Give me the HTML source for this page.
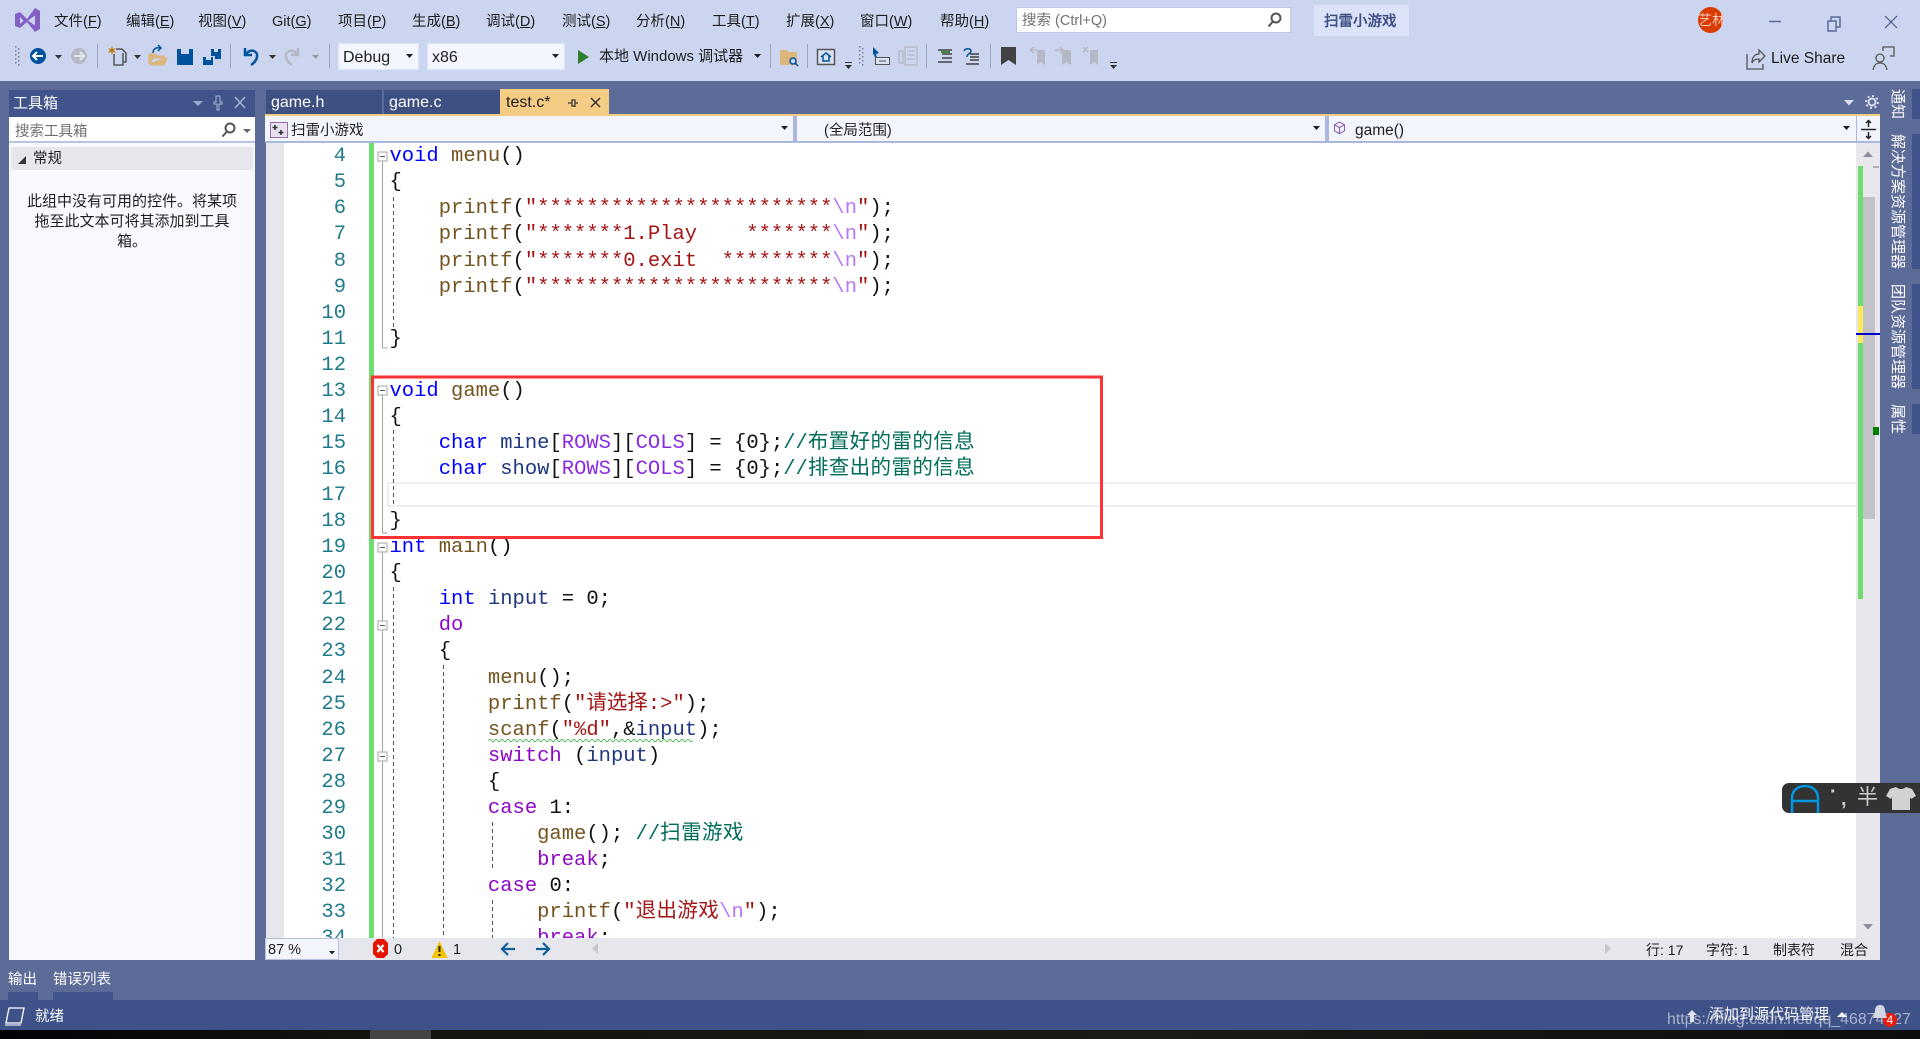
<!DOCTYPE html>
<html lang="zh"><head><meta charset="utf-8"><title>扫雷小游戏 - Visual Studio</title>
<style>
html,body{margin:0;padding:0;background:#5d6b99}
body{width:1920px;height:1039px;position:relative;overflow:hidden;font-family:"Liberation Sans","Noto Sans CJK SC",sans-serif;font-size:15px;color:#1e1e1e}
.a{position:absolute}
.t{position:absolute;white-space:nowrap;line-height:20px}
.m{font-size:14.5px}
.w{color:#fff}
#ed{position:absolute;left:266px;top:143px;width:1590px;height:795px;overflow:hidden;background:#fff}
#nums{position:absolute;left:0;top:1.3px;width:80px;font:20.5px/26.07px "Liberation Mono",monospace;color:#1f7a8c;text-align:right}
#nums div,#code div{height:26.07px}
#code{position:absolute;left:123.5px;top:1.3px;font:20.5px/26.07px "Liberation Mono","Noto Sans CJK SC",monospace;white-space:pre;color:#111}
.k{color:#0000ff}.c{color:#8f08c4}.f{color:#74531f}.s{color:#a31515}.e{color:#b776fb}.r{color:#8a2be2}.v{color:#1f377f}.g{color:#006d5b}
.z{letter-spacing:.4px}
.vt{position:absolute;writing-mode:vertical-rl;text-orientation:sideways;color:#fff;font-size:15px;line-height:18px;white-space:nowrap}
</style></head><body>
<!-- chrome backgrounds -->
<div class="a" style="left:0;top:0;width:1920px;height:81px;background:#ccd5f0"></div>
<div class="a" style="left:1016px;top:7px;width:275px;height:26px;background:#fff;box-sizing:border-box;border:1px solid #bcc7e6"></div>
<div class="a" style="left:1314px;top:5px;width:95px;height:31px;background:#dce2f7"></div>
<div class="a" style="left:338px;top:43px;width:81px;height:27px;background:#f3f6fe;box-sizing:border-box;border:1px solid #dfe6f8"></div>
<div class="a" style="left:427px;top:43px;width:138px;height:27px;background:#f3f6fe;box-sizing:border-box;border:1px solid #dfe6f8"></div>

<!-- menu -->
<span class="t m" style="left:54px;top:11.500px">文件(<u>F</u>)</span>
<span class="t m" style="left:126px;top:11.500px">编辑(<u>E</u>)</span>
<span class="t m" style="left:198px;top:11.500px">视图(<u>V</u>)</span>
<span class="t m" style="left:272px;top:11.500px">Git(<u>G</u>)</span>
<span class="t m" style="left:338px;top:11.500px">项目(<u>P</u>)</span>
<span class="t m" style="left:412px;top:11.500px">生成(<u>B</u>)</span>
<span class="t m" style="left:486px;top:11.500px">调试(<u>D</u>)</span>
<span class="t m" style="left:562px;top:11.500px">测试(<u>S</u>)</span>
<span class="t m" style="left:636px;top:11.500px">分析(<u>N</u>)</span>
<span class="t m" style="left:712px;top:11.500px">工具(<u>T</u>)</span>
<span class="t m" style="left:786px;top:11.500px">扩展(<u>X</u>)</span>
<span class="t m" style="left:860px;top:11.500px">窗口(<u>W</u>)</span>
<span class="t m" style="left:940px;top:11.500px">帮助(<u>H</u>)</span>
<span class="t m" style="left:1022px;top:11px;color:#717171">搜索 (Ctrl+Q)</span>
<span class="t" style="left:1324px;top:12px;color:#3f5185;font-size:14.5px;font-weight:500;-webkit-text-stroke:.3px #3f5185">扫雷小游戏</span>
<div class="a" style="left:1698px;top:7px;width:25px;height:26px;border-radius:50%;background:#dc3b00"></div>
<span class="t" style="left:1698px;top:10px;color:#f6cdbc;font-size:14px;width:25px;overflow:hidden">艺林</span>

<!-- toolbar text -->
<span class="t" style="left:343px;top:48px;font-size:16px">Debug</span>
<span class="t" style="left:432px;top:48px;font-size:16px">x86</span>
<span class="t" style="left:599px;top:47px;font-size:15px">本地 Windows 调试器</span>
<span class="t" style="left:1771px;top:49px;font-size:15.500px">Live Share</span>

<!-- toolbox -->
<div class="a" style="left:9px;top:90px;width:246px;height:870px;background:#f8f9fe"></div>
<div class="a" style="left:9px;top:90px;width:246px;height:27px;background:#40538a"></div>
<span class="t w" style="left:13px;top:94px">工具箱</span>
<div class="a" style="left:9px;top:117px;width:246px;height:26px;background:#fff;box-sizing:border-box;border-bottom:2px solid #b9c4e2"></div>
<span class="t" style="left:15px;top:121.500px;color:#717171;font-size:14.5px">搜索工具箱</span>
<div class="a" style="left:11px;top:147px;width:242px;height:23px;background:#e6e7ed"></div>
<span class="t" style="left:33px;top:149px;font-size:14.5px">常规</span>
<div class="a" style="left:25px;top:191.500px;width:214px;text-align:center;font-size:15px;line-height:20.3px">此组中没有可用的控件。将某项拖至此文本可将其添加到工具箱。</div>

<!-- tabs -->
<div class="a" style="left:266px;top:90px;width:116px;height:24px;background:#3e5082"></div>
<div class="a" style="left:384px;top:90px;width:116px;height:24px;background:#3e5082"></div>
<div class="a" style="left:500px;top:89px;width:109px;height:25px;background:#f5cc84"></div>
<span class="t w" style="left:271px;top:93px;font-size:16px">game.h</span>
<span class="t w" style="left:389px;top:93px;font-size:16px">game.c</span>
<span class="t" style="left:506px;top:93px;font-size:16px">test.c*</span>
<div class="a" style="left:265px;top:114px;width:1615px;height:2px;background:#f5cc84"></div>

<!-- nav bar -->
<div class="a" style="left:265px;top:116px;width:1615px;height:27px;background:#f2f5fe;box-sizing:border-box;border-bottom:2px solid #a9b8dc"></div>
<div class="a" style="left:793px;top:116px;width:4px;height:27px;background:#a9b8dc"></div>
<div class="a" style="left:1325px;top:116px;width:4px;height:27px;background:#a9b8dc"></div>
<div class="a" style="left:1856px;top:116px;width:1px;height:27px;background:#a9b8dc"></div>
<span class="t" style="left:291px;top:120.500px;font-size:14.5px">扫雷小游戏</span>
<span class="t" style="left:824px;top:120.500px;font-size:14.5px">(全局范围)</span>
<span class="t" style="left:1355px;top:120.500px;font-size:15.5px">game()</span>

<!-- editor -->
<div id="ed">
<div class="a" style="left:0;top:0;width:18px;height:795px;background:#e6e7ed"></div>
<div class="a" style="left:121px;top:338.9px;width:1469px;height:25px;box-sizing:border-box;border:2px solid #eeeef3;border-right:0"></div>
<div id="nums"><div>4</div><div>5</div><div>6</div><div>7</div><div>8</div><div>9</div><div>10</div><div>11</div><div>12</div><div>13</div><div>14</div><div>15</div><div>16</div><div>17</div><div>18</div><div>19</div><div>20</div><div>21</div><div>22</div><div>23</div><div>24</div><div>25</div><div>26</div><div>27</div><div>28</div><div>29</div><div>30</div><div>31</div><div>32</div><div>33</div><div>34</div></div>
<div id="code"><div><span class="k">void</span> <span class="f">menu</span>()</div><div>{</div><div>    <span class="f">printf</span>(<span class="s">"************************</span><span class="e">\n</span><span class="s">"</span>);</div><div>    <span class="f">printf</span>(<span class="s">"*******1.Play    *******</span><span class="e">\n</span><span class="s">"</span>);</div><div>    <span class="f">printf</span>(<span class="s">"*******0.exit  *********</span><span class="e">\n</span><span class="s">"</span>);</div><div>    <span class="f">printf</span>(<span class="s">"************************</span><span class="e">\n</span><span class="s">"</span>);</div><div> </div><div>}</div><div> </div><div><span class="k">void</span> <span class="f">game</span>()</div><div>{</div><div>    <span class="k">char</span> <span class="v">mine</span>[<span class="r">ROWS</span>][<span class="r">COLS</span>] = {0};<span class="g">//<span class="z">布置好的雷的信息</span></span></div><div>    <span class="k">char</span> <span class="v">show</span>[<span class="r">ROWS</span>][<span class="r">COLS</span>] = {0};<span class="g">//<span class="z">排查出的雷的信息</span></span></div><div> </div><div>}</div><div><span class="k">int</span> <span class="f">main</span>()</div><div>{</div><div>    <span class="k">int</span> <span class="v">input</span> = 0;</div><div>    <span class="c">do</span></div><div>    {</div><div>        <span class="f">menu</span>();</div><div>        <span class="f">printf</span>(<span class="s">"请选择:&gt;"</span>);</div><div>        <span class="f">scanf</span>(<span class="s">"%d"</span>,&amp;<span class="v">input</span>);</div><div>        <span class="c">switch</span> (<span class="v">input</span>)</div><div>        {</div><div>        <span class="c">case</span> 1:</div><div>            <span class="f">game</span>(); <span class="g">//<span class="z">扫雷游戏</span></span></div><div>            <span class="c">break</span>;</div><div>        <span class="c">case</span> 0:</div><div>            <span class="f">printf</span>(<span class="s">"<span class="z">退出游戏</span></span><span class="e">\n</span><span class="s">"</span>);</div><div>            <span class="c">break</span>;</div></div>
</div>

<!-- scrollbar -->
<div class="a" style="left:1856px;top:143px;width:24px;height:795px;background:#e8e8ec"></div>
<div class="a" style="left:1863px;top:197px;width:12px;height:322px;background:#c2c3c9"></div>
<div class="a" style="left:1858px;top:166px;width:5px;height:433px;background:#6fdd6f"></div>
<div class="a" style="left:1858px;top:306px;width:5px;height:37px;background:#fcea5e"></div>
<div class="a" style="left:1856px;top:333px;width:24px;height:2px;background:#0000cc"></div>
<div class="a" style="left:1873px;top:427px;width:6px;height:8px;background:#008000"></div>
<div class="a" style="left:1873px;top:166px;width:6px;height:2px;background:#b0b0b4"></div>

<!-- right dock -->
<div class="a" style="left:1912px;top:89px;width:8px;height:30px;background:#40538a"></div>
<div class="a" style="left:1912px;top:134px;width:8px;height:135px;background:#40538a"></div>
<div class="a" style="left:1912px;top:284px;width:8px;height:105px;background:#40538a"></div>
<div class="a" style="left:1912px;top:404px;width:8px;height:30px;background:#40538a"></div>
<span class="vt" style="left:1888px;top:89px">通知</span>
<span class="vt" style="left:1888px;top:134px">解决方案资源管理器</span>
<span class="vt" style="left:1888px;top:284px">团队资源管理器</span>
<span class="vt" style="left:1888px;top:404px">属性</span>

<!-- editor status -->
<div class="a" style="left:265px;top:938px;width:1615px;height:22px;background:#e6e7ed"></div>
<div class="a" style="left:265px;top:938px;width:74px;height:22px;background:#f3f5fd;box-sizing:border-box;border:1px solid #b5c0de"></div>
<span class="t" style="left:268px;top:940px;font-size:14.5px">87 %</span>
<span class="t" style="left:394px;top:940px;font-size:14.5px">0</span>
<span class="t" style="left:453px;top:940px;font-size:14.5px">1</span>
<span class="t" style="left:1646px;top:940px;font-size:14px">行: 17</span>
<span class="t" style="left:1706px;top:940px;font-size:14px">字符: 1</span>
<span class="t" style="left:1773px;top:940px;font-size:14px">制表符</span>
<span class="t" style="left:1840px;top:940px;font-size:14px">混合</span>

<!-- bottom -->
<span class="t w" style="left:8px;top:970px;font-size:14.5px">输出</span>
<span class="t w" style="left:53px;top:970px;font-size:14.5px">错误列表</span>
<div class="a" style="left:8px;top:992px;width:30px;height:8px;background:#40538a"></div>
<div class="a" style="left:53px;top:992px;width:60px;height:8px;background:#40538a"></div>
<div class="a" style="left:0;top:1000px;width:1920px;height:30px;background:#3f5189"></div>
<span class="t w" style="left:35px;top:1007px;font-size:14.5px">就绪</span>
<div class="a" style="left:0;top:1030px;width:1920px;height:9px;background:linear-gradient(90deg,#020208,#14140f 20%,#1a1a16 60%,#0d0d0d)"></div>
<div class="a" style="left:370px;top:1030px;width:61px;height:9px;background:#444"></div>
<span class="t w" style="left:1709px;top:1005px;font-size:15px">添加到源代码管理</span>
<span class="t" style="left:1667px;top:1010px;font-size:15.900px;color:rgba(255,255,255,.55)">https://blog.csdn.net/qq_46874327</span>
<div class="a" style="left:1883px;top:1013px;width:14px;height:14px;border-radius:50%;background:#e81b0c;color:#fff;font-size:12px;line-height:14px;text-align:center">4</div>

<!-- IME -->
<div class="a" style="left:1782px;top:783px;width:138px;height:30px;background:#333;border-radius:7px 0 0 7px"></div>
<span class="t" style="left:1830px;top:782px;font-size:20px;font-weight:bold;color:#ccc">·</span>
<span class="t" style="left:1841px;top:789px;font-size:20px;font-weight:bold;color:#ccc">,</span>
<span class="t" style="left:1857px;top:788px;font-size:21px;color:#ccc">半</span>

<!-- icons -->
<svg class="a" style="left:0;top:0" width="1920" height="1039" viewBox="0 0 1920 1039" fill="none">
<!-- VS logo -->
<path d="M15 14l5-2 7 7 8-11 5 3v18l-5 3-8-10-7 6-5-2zM20 17v7l3.500-3.500zM28 20.500l7 5v-10z" fill="#865fc5" fill-rule="evenodd"/>
<!-- search mag -->
<g stroke="#555" stroke-width="2"><circle cx="1276" cy="18" r="4.500"/><path d="M1272.500 22l-4 4.500"/></g>
<g stroke="#555" stroke-width="2"><circle cx="230" cy="128" r="4.500"/><path d="M226.500 132l-4 4.500"/></g>
<path d="M243 129h8l-4 4z" fill="#666"/>
<!-- window ctrls -->
<path d="M1769 21.500h12" stroke="#5a6a9a" stroke-width="1.500"/>
<path d="M1828 21h8v10h-8zM1831 21v-4h9v10h-4" stroke="#5a6a9a" stroke-width="1.500"/>
<path d="M1885 16l12 12M1897 16l-12 12" stroke="#4a5a88" stroke-width="1.200"/>
<!-- gripper -->
<g fill="#7a7f90"><path d="M15 46h1.500v1.500H15zM18 48h1.500v1.500H18zM15 50h1.500v1.500H15zM18 52h1.500v1.500H18zM15 54h1.500v1.500H15zM18 56h1.500v1.500H18zM15 58h1.500v1.500H15zM18 60h1.500v1.500H18zM15 62h1.500v1.500H15zM18 64h1.500v1.500H18z"/>
<path d="M859 46h1.500v1.500H859zM862 48h1.500v1.500H862zM859 50h1.500v1.500H859zM862 52h1.500v1.500H862zM859 54h1.500v1.500H859zM862 56h1.500v1.500H862zM859 58h1.500v1.500H859zM862 60h1.500v1.500H862zM859 62h1.500v1.500H859zM862 64h1.500v1.500H862z"/></g>
<!-- back / forward -->
<circle cx="38" cy="56" r="8" fill="#00539c"/><path d="M43 56h-9M37 52l-4 4 4 4" stroke="#fff" stroke-width="2"/>
<circle cx="79" cy="56" r="8" fill="#b5b8c4"/><path d="M74 56h9M80 52l4 4-4 4" stroke="#e6e8f0" stroke-width="2"/>
<g fill="#333"><path d="M55 55h7l-3.500 4zM134 55h7l-3.500 4zM269 55h7l-3.500 4z"/></g><path d="M312 55h7l-3.500 4z" fill="#999"/>
<!-- separators -->
<g stroke="#9ba6c4"><path d="M97.500 44v24M230.500 44v24M329.500 44v24M770.500 44v24M807.500 44v24M926.500 44v24M990.500 44v24"/></g>
<!-- new project -->
<path d="M112 46l1 3 3-1-2 2 2 3-3-1-1 3-1-3-3 1 2-3-2-2 3 1z" fill="#c27d1a"/>
<path d="M114 54v11h9V53M116 49h6l4 4v9h-3" stroke="#424242" stroke-width="1.300"/>
<!-- open folder -->
<path d="M149 64V54h6l2 2h7v2h-11l-3 7h14l3-7h-3" fill="#dcb67a" stroke="#dcb67a"/>
<path d="M153 53c0-4 3-6 7-5M158 45l3 3-3 3" stroke="#00539c" stroke-width="1.500"/>
<!-- save -->
<path d="M177 49h4v5h8v-5h4v16h-16z" fill="#00539c"/>
<path d="M203 57h3v3h5v-3h2v8h-10zM211 49h3v3h4v-3h3v10h-6v-3h-4z" fill="#00539c"/>
<!-- undo/redo -->
<path d="M245 48v7h7M246 54c5-6 12-3 11 3-.5 3-3 6-6 8" stroke="#00539c" stroke-width="2.500"/>
<path d="M298 48v7h-7M297 54c-5-6-12-3-11 3 .5 3 3 6 6 8" stroke="#b5b8c4" stroke-width="2.500"/>
<!-- arrows combo -->
<g fill="#1e1e1e"><path d="M406 54h7l-3.500 4zM552 54h7l-3.500 4zM754 54h7l-3.500 4zM781 126h7l-3.500 4zM1313 126h7l-3.500 4zM1843 126h7l-3.500 4zM329 951h6l-3 3.500z"/></g>
<path d="M578 50l11 7-11 7z" fill="#2f7d2f"/>
<!-- folder search -->
<path d="M780 50h7l2 2h8v13h-17z" fill="#dcb67a"/><circle cx="793" cy="61" r="3" fill="#ccd5f0" stroke="#00539c" stroke-width="1.500"/><path d="M795 63l3 3" stroke="#00539c" stroke-width="1.500"/>
<!-- home -->
<rect x="817.500" y="49.500" width="17" height="15" fill="#dbe1f3" stroke="#555" stroke-width="1.500"/><path d="M821 57l5-4 5 4M823 56v5h6v-5" stroke="#00539c" stroke-width="1.500"/>
<g fill="#333"><path d="M845 65h7l-3.500 4zM1110 65h7l-3.500 4z"/></g><path d="M845 62.500h7M1110 62.500h7" stroke="#333"/>
<!-- cursor & grey -->
<path d="M873 47l6 6-3 1 1 4-2 0-1-4-1 1z" fill="#00539c"/><rect x="875.500" y="57.500" width="14" height="7" stroke="#555" fill="#dbe1f3"/><path d="M879 61h7" stroke="#555"/>
<path d="M899 51v12h4V51zM905 47h12v18h-12zM907 51h8M907 55h8M907 59h8" stroke="#b5b8c4" stroke-width="1.300"/>
<!-- indent -->
<path d="M938 50h14M942 54h10M942 58h10M938 62h14" stroke="#424242" stroke-width="1.500"/><path d="M941 52h9" stroke="#3c8c3c" stroke-width="2"/>
<path d="M970 54h9M970 57h9M970 60h9M966 64h13" stroke="#424242" stroke-width="1.500"/><path d="M964 51c1-3 7-3 7 0s-4 2-4 6" stroke="#00539c" stroke-width="1.500"/>
<!-- bookmarks -->
<path d="M1001 47h15v18l-7.500-5-7.500 5z" fill="#424242"/>
<g fill="#b5b8c4"><path d="M1037 50h8v15l-4-3-4 3zM1062 50h9v15l-4.500-3-4.500 3zM1090 50h8v15l-4-3-4 3z"/></g>
<path d="M1030 50l4-3M1030 50l4 3M1030 50h7M1055 50h8M1060 47l3 3-3 3M1083 47l5 5M1088 47l-5 5" stroke="#b5b8c4" stroke-width="1.500"/>
<!-- live share -->
<path d="M1747 54v15h16v-5M1752 63c0-6 3-9 7-9v-4l6 6-6 6v-3c-3 0-6 1-7 4z" stroke="#555" stroke-width="1.300"/>
<!-- feedback -->
<circle cx="1880" cy="58" r="4" stroke="#555" stroke-width="1.300"/><path d="M1873 70c1-5 3-7 7-7s6 2 7 7M1883 51v-4h11v9h-4" stroke="#555" stroke-width="1.300"/>
<!-- toolbox icons -->
<path d="M193 101h10l-5 5z" fill="#9aa7cc"/>
<path d="M216 96v6h-2v2h3v6h2v-6h3v-2h-2v-6z" stroke="#a9b5d6" fill="none"/>
<path d="M235 97l10 11M245 97l-10 11" stroke="#a9b5d6" stroke-width="1.500"/>
<path d="M18 164h8v-8z" fill="#333"/>
<!-- tab icons -->
<path d="M568 103h4M572 100v6h3v-6zM575 103h3M575 106v1" stroke="#333" stroke-width="1.200"/>
<path d="M591 98l9 9M600 98l-9 9" stroke="#333" stroke-width="1.500"/>
<path d="M1844 100h10l-5 5.500z" fill="#d8deef"/>
<circle cx="1872" cy="102" r="3.500" stroke="#d8deef" stroke-width="2"/>
<circle cx="1872" cy="102" r="6" stroke="#d8deef" stroke-dasharray="2 2.700" stroke-width="2"/>
<!-- nav icons -->
<rect x="270.500" y="122.500" width="17" height="15" fill="#e8dff0" stroke="#9a6faa"/>
<path d="M275 125v5M272.500 127.500h5M281 130v5M278.500 132.500h5" stroke="#333" stroke-width="1.600"/>
<path d="M1339.500 122l5 2.800v6l-5 2.800-5-2.800v-6zM1334.500 124.800l5 2.800 5-2.800M1339.500 127.600v6" stroke="#8d5fb0" stroke-width="1.100"/>
<path d="M1861 129.500h15M1868.500 121v6M1868.500 132v6M1866 123l2.500-2.500 2.500 2.500M1866 136l2.500 2.500 2.500-2.500" stroke="#222" stroke-width="1.500"/>
<!-- scroll arrows -->
<path d="M1863 157l5-5.500 5 5.500z" fill="#8b8e9a"/>
<path d="M1863 924h10l-5 5.500z" fill="#8b8e9a"/>
<!-- outlining -->
<g stroke="#a5a5a5" fill="#fff">
<path d="M382.500 160v188h5M382.500 392v141h5M382.500 551v387" fill="none"/>
<rect x="378" y="152" width="9" height="9"/><rect x="378" y="386" width="9" height="9"/><rect x="378" y="543" width="9" height="9"/><rect x="378" y="621" width="9" height="9"/><rect x="378" y="752" width="9" height="9"/>
</g>
<g stroke="#555"><path d="M380 156.500h5M380 390.500h5M380 547.500h5M380 625.500h5M380 756.500h5"/></g>
<g stroke="#555" stroke-dasharray="4 3">
<path d="M393.500 197v130M393.500 430v76M393.500 587v351M443.500 665v273M492.500 822v48M492.500 900v38"/>
</g>
<!-- green change margin -->
<path d="M371.500 143v795" stroke="#6fdd6f" stroke-width="5"/>
<path d="M372.500 428v80" stroke="#fcea5e" stroke-width="2"/>
<!-- squiggle -->
<path d="M488.500 740.500q1.500-2.500 3 0t3 0 3 0 3 0 3 0 3 0 3 0 3 0 3 0 3 0 3 0 3 0 3 0 3 0 3 0 3 0 3 0 3 0 3 0 3 0 3 0 3 0 3 0 3 0 3 0 3 0 3 0 3 0 3 0 3 0 3 0 3 0 3 0 3 0 3 0 3 0 3 0 3 0 3 0 3 0 3 0 3 0 3 0 3 0 3 0 3 0 3 0 3 0 3 0 3 0 3 0 3 0 3 0 3 0 3 0 3 0 3 0 3 0 3 0 3 0 3 0 3 0 3 0 3 0 3 0 3 0 3 0 3 0" stroke="#5cb85c" stroke-width="1"/>
<!-- red box -->
<rect x="372.500" y="377" width="729" height="160.500" stroke="#ff3333" stroke-width="3"/>
<!-- status icons -->
<path d="M377 939h7l4 4v11l-4 4h-7l-4-4v-11z" fill="#e51400"/><path d="M377.500 945l6 7M383.500 945l-6 7" stroke="#fff" stroke-width="2.200"/>
<path d="M439.500 941l8 17h-16z" fill="#f5c400"/><path d="M439.500 946v6M439.500 954v2" stroke="#222" stroke-width="2"/>
<path d="M515 949h-13M508 943l-6 6 6 6" stroke="#0e6198" stroke-width="2.200"/>
<path d="M536 949h13M543 943l6 6-6 6" stroke="#0e6198" stroke-width="2.200"/>
<path d="M598 943v11l-6-5.500z" fill="#c5c7d0"/>
<path d="M1605 943v11l6-5.500z" fill="#c5c7d0"/>
<!-- status bar -->
<path d="M9 1008h15l-3 15H6z" stroke="#fff" stroke-width="1.300"/><path d="M5 1025h16" stroke="#c8cde0" stroke-width="1.500"/>
<path d="M1692 1010l5 5h-3v7h-4v-7h-3z" fill="#dfe3ee"/>
<path d="M1837 1017l5-5 5 5z" fill="#fff"/>
<path d="M1880 1005c-4 0-5 3-5 6l-2 7h14l-2-7c0-3-1-6-5-6z" fill="#d4d8e4"/>
<!-- IME -->
<path d="M1792 813v-15c0-16 26-16 26 0v15M1792 801h26" stroke="#0096e0" stroke-width="2.500"/>
<path d="M1893 789l6-2c1 1 3 2 5 2s4-1 5-2l6 2 4 7-5 3-1-2v13h-18v-13l-1 2-5-3z" fill="#d2d2d2" transform="translate(-3 0)"/>
</svg>
</body></html>
